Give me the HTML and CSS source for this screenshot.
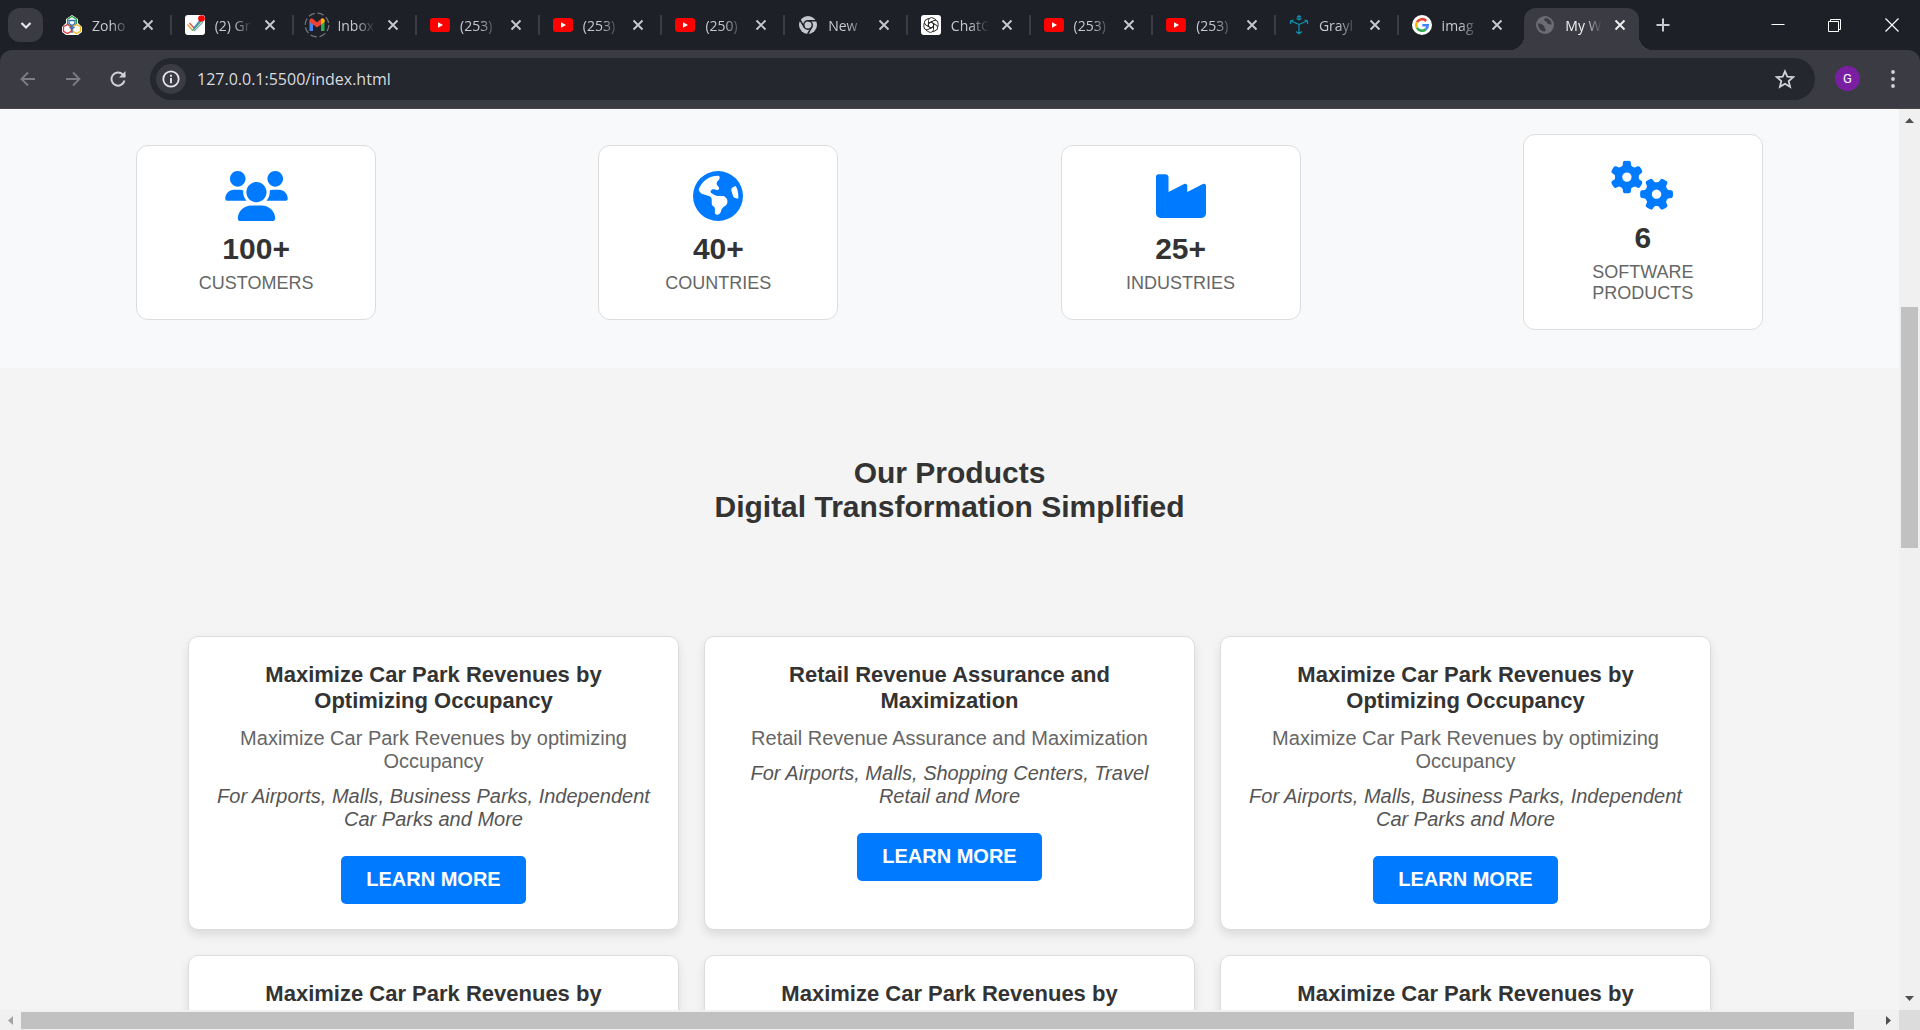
FILE: index.html
```html
<!DOCTYPE html>
<html lang="en">
<head>
<meta charset="utf-8">
<meta name="viewport" content="width=device-width, initial-scale=1">
<title>My Website</title>
<link rel="stylesheet" href="styles.css">
</head>
<body>
<svg class="sprite" aria-hidden="true">
  <symbol id="i-x" viewBox="0 0 20 20"><path d="M5.500 5.500l9 9M14.500 5.500l-9 9" stroke="currentColor" stroke-width="1.900" fill="none"/></symbol>
  <symbol id="i-yt" viewBox="0 0 20 20"><rect y="3" width="20" height="14" rx="3" fill="#f00"/><path d="M8 7.300l5 2.700-5 2.700z" fill="#fff"/></symbol>
  <symbol id="i-gear" viewBox="-170 -170 340 340"><path fill-rule="evenodd" d="M0-122A122 122 0 1 1 0 122A122 122 0 1 1 0-122zM0-48A48 48 0 1 0 0 48A48 48 0 1 0 0-48z"/><g id="teeth"><path id="tooth" d="M-60-98L-44-120-40-152Q-38-167-22-168Q0-171 22-168Q38-167 40-152L44-120 60-98z"/><use href="#tooth" transform="rotate(60)"/><use href="#tooth" transform="rotate(120)"/><use href="#tooth" transform="rotate(180)"/><use href="#tooth" transform="rotate(240)"/><use href="#tooth" transform="rotate(300)"/></g></symbol>
</svg>
<div class="window">
  <header class="tabstrip">
    <button class="tab-search" aria-label="Search tabs"><svg class="ic" viewBox="0 0 20 20"><path d="M5.500 8l4.500 4.500L14.500 8" fill="none" stroke="currentColor" stroke-width="2.200"/></svg></button>
    <nav class="tabs" aria-label="Tabs">
      <div class="tab"><svg class="ic" viewBox="0 0 20 20"><path d="M10 0l6 4v4l4 4v5l-4 3H4l-4-3v-5l4-4V4z" fill="#fff"/><g fill="none" stroke-width="1.300"><path d="M10 1.500l4.500 2.700v5L10 12 5.500 9.200v-5z" stroke="#2ba24c"/><path d="M5.500 9.500l3.800 2.300v4.500L5.500 18.500 1.500 16.300v-4.500z" stroke="#e5393b"/><path d="M14.500 9.500l4 2.300v4.500l-4 2.200-3.800-2.200v-4.500z" stroke="#f5b921"/><path d="M7 5.500h6v3l-3 2-3-2zM10 10v8M7.500 12l2.500 2 2.500-2" stroke="#2f6fb5"/></g></svg><span class="tab-title">Zoho</span><button class="tab-close" aria-label="Close tab"><svg class="ic"><use href="#i-x"/></svg></button></div>
      <div class="tab"><svg class="ic" viewBox="0 0 20 20"><rect width="20" height="20" rx="3" fill="#fff"/><g fill="none" stroke-width="1.300"><path d="M2.500 9.500l5 6" stroke="#f2a03d"/><path d="M4.500 8l4.500 5" stroke="#e5513e"/><path d="M7.500 15.500l9-10" stroke="#35a853"/><path d="M9 13l7-9" stroke="#4a86c9"/><path d="M9 16l9-9" stroke="#7aa7b5"/></g><circle cx="16.500" cy="3.500" r="3.300" fill="#f00"/></svg><span class="tab-title">(2) Gr</span><button class="tab-close" aria-label="Close tab"><svg class="ic"><use href="#i-x"/></svg></button></div>
      <div class="tab"><svg class="ic" viewBox="0 0 20 20" overflow="visible"><circle cx="10" cy="10" r="11.800" fill="none" stroke="#71757f" stroke-width="1.300" stroke-dasharray="6.500 2.800"/><path d="M2.500 5.500V16H6V8.500z" fill="#4285f4"/><path d="M17.500 5.500V16H14V8.500z" fill="#34a853"/><path d="M2.500 5.500c0-2 2-2.500 3.500-1.500l4 3.200L14 4c1.500-1 3.500-.5 3.500 1.500V7L10 12.500 2.500 7z" fill="#ea4335"/><path d="M14 4c1.500-1 3.500-.5 3.500 1.500V7L14 9.500z" fill="#fbbc04"/></svg><span class="tab-title">Inbox</span><button class="tab-close" aria-label="Close tab"><svg class="ic"><use href="#i-x"/></svg></button></div>
      <div class="tab"><svg class="ic"><use href="#i-yt"/></svg><span class="tab-title">(253)</span><button class="tab-close" aria-label="Close tab"><svg class="ic"><use href="#i-x"/></svg></button></div>
      <div class="tab"><svg class="ic"><use href="#i-yt"/></svg><span class="tab-title">(253)</span><button class="tab-close" aria-label="Close tab"><svg class="ic"><use href="#i-x"/></svg></button></div>
      <div class="tab"><svg class="ic"><use href="#i-yt"/></svg><span class="tab-title">(250)</span><button class="tab-close" aria-label="Close tab"><svg class="ic"><use href="#i-x"/></svg></button></div>
      <div class="tab"><svg class="ic" viewBox="0 0 20 20"><circle cx="10" cy="10" r="9" fill="#c4c7cf"/><circle cx="10" cy="10" r="4.300" fill="none" stroke="#1d2027" stroke-width="1.500"/><path d="M10 5.700h8.500M6.300 12.200L2 5M13.700 12.200L9.700 19" stroke="#1d2027" stroke-width="1.500"/></svg><span class="tab-title">New</span><button class="tab-close" aria-label="Close tab"><svg class="ic"><use href="#i-x"/></svg></button></div>
      <div class="tab"><svg class="ic" viewBox="0 0 20 20"><rect width="20" height="20" rx="3" fill="#fff"/><g transform="translate(10 10)" fill="none" stroke="#222" stroke-width=".9"><path id="petal" d="M-2.500-1.500V-4.500a3 3 0 0 1 4.500-2.500l3 1.700M-2.500-1.500L0-3l3.500 2"/><use href="#petal" transform="rotate(60)"/><use href="#petal" transform="rotate(120)"/><use href="#petal" transform="rotate(180)"/><use href="#petal" transform="rotate(240)"/><use href="#petal" transform="rotate(300)"/></g></svg><span class="tab-title">ChatG</span><button class="tab-close" aria-label="Close tab"><svg class="ic"><use href="#i-x"/></svg></button></div>
      <div class="tab"><svg class="ic"><use href="#i-yt"/></svg><span class="tab-title">(253)</span><button class="tab-close" aria-label="Close tab"><svg class="ic"><use href="#i-x"/></svg></button></div>
      <div class="tab"><svg class="ic"><use href="#i-yt"/></svg><span class="tab-title">(253)</span><button class="tab-close" aria-label="Close tab"><svg class="ic"><use href="#i-x"/></svg></button></div>
      <div class="tab"><svg class="ic" viewBox="0 0 20 20"><path d="M10 18.500V9.500L2 6M10 9.500L18 6M10 4.500V1M8 2.200L10 .7l2 1.500M7.500 3.500L10 4.800l2.500-1.300M1.500 9V6l3-1M18.500 9V6l-3-1M7 16.500l3 2.300 3-2.300" fill="none" stroke="#0e93b3" stroke-width="1.200"/></svg><span class="tab-title">Grayl</span><button class="tab-close" aria-label="Close tab"><svg class="ic"><use href="#i-x"/></svg></button></div>
      <div class="tab tab-last"><svg class="ic" viewBox="0 0 20 20"><circle cx="10" cy="10" r="10" fill="#fff"/><g fill="none" stroke-width="2.600"><path d="M14.200 6A5.700 5.700 0 0 0 5 7.200" stroke="#ea4335"/><path d="M5 7.200a5.700 5.700 0 0 0 0 5.600" stroke="#fbbc05"/><path d="M5 12.800a5.700 5.700 0 0 0 8.800 1.400" stroke="#34a853"/><path d="M13.800 14.200a5.700 5.700 0 0 0 1.900-3.900H10.300" stroke="#4285f4"/></g></svg><span class="tab-title">imag</span><button class="tab-close" aria-label="Close tab"><svg class="ic"><use href="#i-x"/></svg></button></div>
      <div class="tab tab-active"><svg class="ic" viewBox="0 0 20 20"><circle cx="10" cy="10" r="9" fill="#6b6d72"/><path d="M3 9c2-1 4 0 6 2 1 1 0 3 2 3l-1 2.500C6 16.500 3 13 3 9zM10 3c-1.500 1.500-.5 3 1 3.500s1 2.500 3 2.500l2.500.8C17 6 14 3 10 3z" fill="#3b3b43"/></svg><span class="tab-title">My W</span><button class="tab-close" aria-label="Close tab"><svg class="ic"><use href="#i-x"/></svg></button></div>
    </nav>
    <button class="new-tab" aria-label="New tab"><svg class="ic" viewBox="0 0 20 20"><path d="M10 3.500v13M3.500 10h13" stroke="currentColor" stroke-width="2"/></svg></button>
    <div class="win-controls">
      <button aria-label="Minimize"><svg class="ic" viewBox="0 0 20 20"><path d="M3.500 9.500h13" stroke="currentColor"/></svg></button>
      <button aria-label="Restore"><svg class="ic" viewBox="0 0 20 20"><path d="M3.500 6.500h10v10h-10zM5.500 6V4.500h10v10H14" fill="none" stroke="currentColor"/></svg></button>
      <button aria-label="Close"><svg class="ic" viewBox="0 0 20 20"><path d="M3.500 3.500l13 13M16.500 3.500l-13 13" stroke="currentColor" stroke-width="1.200"/></svg></button>
    </div>
  </header>

  <div class="toolbar">
    <button class="tool dim" aria-label="Back"><svg class="ic" viewBox="0 0 20 20"><path d="M17 10H4M10 3.500L3.500 10l6.500 6.500" fill="none" stroke="currentColor" stroke-width="1.800"/></svg></button>
    <button class="tool dim" aria-label="Forward"><svg class="ic" viewBox="0 0 20 20"><path d="M3 10h13M10 3.500l6.500 6.500-6.500 6.500" fill="none" stroke="currentColor" stroke-width="1.800"/></svg></button>
    <button class="tool" aria-label="Reload"><svg class="ic" viewBox="0 0 20 20"><path d="M16.500 11.500A6.600 6.600 0 1 1 14.800 5.400L17 7.500" fill="none" stroke="currentColor" stroke-width="2"/><path d="M17.500 2v6.500H11z" fill="currentColor"/></svg></button>
    <div class="omnibox">
      <button class="site-info" aria-label="View site information"><svg class="ic" viewBox="0 0 20 20"><circle cx="10" cy="10" r="7.700" fill="none" stroke="currentColor" stroke-width="1.800"/><path d="M10 9v5.200M10 5.800v1.900" stroke="currentColor" stroke-width="1.900"/></svg></button>
      <input class="url" type="text" aria-label="Address" value="127.0.0.1:5500/index.html">
      <button class="star" aria-label="Bookmark this tab"><svg class="ic" viewBox="0 0 20 20"><path d="M10 2.300l2.300 5.300 5.900.5-4.500 3.900 1.400 5.800L10 14.700l-5.100 3.100L6.300 12 1.800 8.100l5.900-.5z" fill="none" stroke="currentColor" stroke-width="1.800"/></svg></button>
    </div>
    <button class="profile" aria-label="Profile">G</button>
    <button class="menu" aria-label="Menu"><svg class="ic" viewBox="0 0 20 20"><g fill="currentColor"><circle cx="10" cy="3" r="1.900"/><circle cx="10" cy="10" r="1.900"/><circle cx="10" cy="17" r="1.900"/></g></svg></button>
  </div>

  <div class="viewport">
    <main class="page">
      <section class="stats">
        <div class="stat"><svg class="stat-icon wide" viewBox="0 0 640 512"><path d="M319.900 320c57.410 0 103.100-46.560 103.100-104c0-57.440-46.540-104-103.100-104c-57.410 0-103.100 46.560-103.100 104C215.900 273.400 262.500 320 319.900 320zM369.900 352H270.100C191.600 352 128 411.700 128 485.300C128 500.100 140.700 512 156.400 512h327.200C499.300 512 512 500.100 512 485.300C512 411.700 448.400 352 369.900 352zM512 160c44.180 0 80-35.820 80-80S556.200 0 512 0c-44.180 0-80 35.820-80 80S467.800 160 512 160zM183.900 216c0-5.449 .9824-10.630 1.609-15.910C174.600 194.100 162.600 192 149.900 192H88.080C39.440 192 0 233.800 0 285.300C0 295.600 7.887 304 17.620 304h199.500C196.700 280.200 183.900 249.700 183.900 216zM128 160c44.180 0 80-35.820 80-80S172.200 0 128 0C83.820 0 48 35.820 48 80S83.820 160 128 160zM551.900 192h-61.840c-12.800 0-24.880 3.037-35.860 8.240C454.800 205.500 455.800 210.600 455.800 216c0 33.710-12.780 64.210-33.160 88h199.700C632.100 304 640 295.600 640 285.300C640 233.800 600.600 192 551.900 192z"/></svg><h3 class="stat-number">100+</h3><p class="stat-label">CUSTOMERS</p></div>
        <div class="stat"><svg class="stat-icon" viewBox="0 0 512 512"><path d="M57.700 193l9.400 16.400c8.300 14.500 21.900 25.200 38 29.800L163 255.700c17.200 4.900 29 20.600 29 38.500v39.900c0 11 6.200 21 16 25.900s16 14.900 16 25.900v39c0 15.600 14.900 26.900 29.900 22.600c16.100-4.600 28.600-17.500 32.700-33.800l2.800-11.200c4.200-16.900 15.200-31.400 30.300-40l8.100-4.600c15-8.500 24.200-24.500 24.200-41.700v-8.300c0-12.700-5.100-24.900-14.100-33.900l-3.900-3.900c-9-9-21.200-14.100-33.900-14.100H257c-11.100 0-22.100-2.900-31.800-8.400l-34.500-19.700c-4.300-2.500-7.600-6.500-9.200-11.200c-3.200-9.600 1.100-20 10.200-24.500l5.900-3c6.600-3.300 14.300-3.900 21.300-1.500l23.200 7.700c8.200 2.700 17.200-.4 21.900-7.500c4.700-7 4.200-16.300-1.200-22.800l-13.600-16.300c-10-12-9.900-29.500 .3-41.300l15.700-18.300c8.800-10.300 10.200-25 3.500-36.700l-2.400-4.200c-3.500-.2-6.900-.3-10.400-.3C163.100 48 84.400 108.900 57.700 193zM464 256c0-36.800-9.600-71.400-26.400-101.500L412 164.800c-15.700 6.300-23.800 23.800-18.500 39.800l16.900 50.700c3.500 10.400 12 18.300 22.600 20.900l29.100 7.300c1.200-9 1.800-18.200 1.800-27.500zM0 256a256 256 0 1 1 512 0A256 256 0 1 1 0 256z"/></svg><h3 class="stat-number">40+</h3><p class="stat-label">COUNTRIES</p></div>
        <div class="stat"><svg class="stat-icon" viewBox="0 0 512 512"><path d="M24 32H96c18 0 32 12 32 30v153l160-83c15-7 32 2 32 17v66l160-83c15-7 32 2 32 17v283c0 27-21 48-48 48H48c-27 0-48-21-48-48V56C0 43 11 32 24 32z"/></svg><h3 class="stat-number">25+</h3><p class="stat-label">INDUSTRIES</p></div>
        <div class="stat"><svg class="stat-icon wide" viewBox="0 0 640 512"><use href="#i-gear" x="-9" y="6" width="338" height="338"/><g transform="translate(464 350) rotate(30)"><use href="#i-gear" x="-169" y="-169" width="338" height="338"/></g></svg><h3 class="stat-number">6</h3><p class="stat-label">SOFTWARE PRODUCTS</p></div>
      </section>
      <section class="products">
        <h2 class="products-title">Our Products<br>Digital Transformation Simplified</h2>
        <div class="grid">
          <article class="card"><h3>Maximize Car Park Revenues by Optimizing Occupancy</h3><p>Maximize Car Park Revenues by optimizing Occupancy</p><p class="audience">For Airports, Malls, Business Parks, Independent Car Parks and More</p><a class="btn" href="#">LEARN MORE</a></article>
          <article class="card"><h3>Retail Revenue Assurance and Maximization</h3><p>Retail Revenue Assurance and Maximization</p><p class="audience">For Airports, Malls, Shopping Centers, Travel Retail and More</p><a class="btn" href="#">LEARN MORE</a></article>
          <article class="card"><h3>Maximize Car Park Revenues by Optimizing Occupancy</h3><p>Maximize Car Park Revenues by optimizing Occupancy</p><p class="audience">For Airports, Malls, Business Parks, Independent Car Parks and More</p><a class="btn" href="#">LEARN MORE</a></article>
          <article class="card"><h3>Maximize Car Park Revenues by</h3></article>
          <article class="card"><h3>Maximize Car Park Revenues by</h3></article>
          <article class="card"><h3>Maximize Car Park Revenues by</h3></article>
        </div>
      </section>
    </main>
    <div class="vbar"><svg class="arrow" viewBox="0 0 21 21"><path d="M6 14h9L10.500 9z" fill="#505050"/></svg><div class="vtrack"><div class="vthumb"></div></div><svg class="arrow" viewBox="0 0 21 21"><path d="M6 7h9l-4.500 5z" fill="#505050"/></svg></div>
    <div class="hbar"><svg class="arrow" viewBox="0 0 21 21"><path d="M13 6v9l-5-4.500z" fill="#a3a3a3"/></svg><div class="htrack"><div class="hthumb"></div></div><svg class="arrow" viewBox="0 0 21 21"><path d="M8 6v9l5-4.500z" fill="#505050"/></svg></div>
    <div class="corner"></div>
  </div>
</div>
</body>
</html>
```
FILE: styles.css
```css
* { box-sizing: border-box; }

body {
  margin: 0;
  font-family: "Liberation Sans", Arial, sans-serif;
  color: #333;
}

h2, h3, p { margin: 0; }

button {
  border: 0;
  padding: 0;
  background: none;
  color: inherit;
  font: inherit;
  display: flex;
  align-items: center;
  justify-content: center;
}

.sprite { position: absolute; width: 0; height: 0; }
.ic { width: 20px; height: 20px; flex: none; display: block; }

.window {
  height: 100vh;
  display: flex;
  flex-direction: column;
  overflow: hidden;
  background: #1d2027;
}

/* Tab strip */
.tabstrip {
  flex: none;
  height: 50px;
  display: flex;
  align-items: center;
  padding-left: 8px;
  color: #c7c9cf;
  font-family: "Open Sans", "Noto Sans", sans-serif;
  font-size: 14px;
}
.tab-search {
  width: 35px;
  height: 34px;
  border-radius: 12px;
  background: #3b3b43;
  color: #e6e6ea;
}
.tabs {
  flex: 0 1 1595px;
  min-width: 0;
  margin-left: 5px;
  align-self: stretch;
  display: grid;
  grid-template-columns: repeat(13, 1fr);
}
.tab {
  position: relative;
  display: flex;
  align-items: center;
  padding: 0 13px 0 14px;
  min-width: 0;
}
.tab::after {
  content: "";
  position: absolute;
  right: -1px;
  top: 15px;
  width: 2px;
  height: 20px;
  background: #3b3d44;
}
.tab-last::after { display: none; }
.tab-title {
  flex: 1;
  min-width: 0;
  margin: 0 8px 0 10px;
  overflow: hidden;
  white-space: nowrap;
  -webkit-mask-image: linear-gradient(to right, #000 50%, transparent);
  mask-image: linear-gradient(to right, #000 50%, transparent);
}
.tab-active {
  margin: 8px 4px 0;
  padding: 0 9px 8px 11px;
  border-radius: 12px 12px 0 0;
  background: #3b3b43;
  color: #f0f0f2;
}
/* Flared feet of the active tab */
.tab-active::before,
.tab-active::after {
  content: "";
  position: absolute;
  display: block;
  top: auto;
  bottom: 0;
  width: 14px;
  height: 14px;
}
.tab-active::before {
  left: -14px;
  background: radial-gradient(circle at 0 0, transparent 14px, #3b3b43 14px);
}
.tab-active::after {
  right: -14px;
  background: radial-gradient(circle at 100% 0, transparent 14px, #3b3b43 14px);
}
.new-tab { width: 40px; height: 40px; }
.win-controls {
  margin-left: auto;
  display: flex;
  align-self: stretch;
  color: #fff;
}
.win-controls button { width: 57px; }

/* Toolbar */
.toolbar {
  flex: none;
  height: 59px;
  display: flex;
  align-items: center;
  padding: 0 12px 1px 5px;
  border-bottom: 1px solid #4b4548;
  border-radius: 12px 12px 0 0;
  background: #3b3b43;
  color: #d0d2d8;
}
.tool { width: 45px; height: 42px; }
.dim { color: #7c7d84; }
.omnibox {
  flex: 1;
  height: 42px;
  margin: 0 20px 0 10px;
  padding: 0 20px 0 6px;
  display: flex;
  align-items: center;
  border-radius: 21px;
  background: #24272e;
}
.site-info {
  width: 30px;
  height: 30px;
  border-radius: 50%;
  background: #3b3b43;
  color: #e6e6ea;
}
.url {
  flex: 1;
  min-width: 0;
  margin-left: 11px;
  padding: 0;
  border: 0;
  outline: 0;
  background: none;
  color: #d8dadf;
  font-family: "Open Sans", "Noto Sans", sans-serif;
  font-size: 16px;
}
.profile {
  width: 25px;
  height: 25px;
  border-radius: 50%;
  background: #7b1fa2;
  color: #fff;
  font-family: Roboto, sans-serif;
  font-size: 13px;
}
.menu { width: 30px; height: 40px; margin-left: 18px; }

/* Page viewport and its scrollbars */
.viewport {
  flex: 1;
  min-height: 0;
  display: grid;
  grid-template: minmax(0, 1fr) 20px / minmax(0, 1fr) 21px;
  background: #f4f4f4;
}
.page { overflow: hidden; }
.vbar, .hbar { display: flex; background: #f0f0f0; }
.vbar { flex-direction: column; }
.arrow { flex: none; width: 21px; height: 21px; display: block; }
.vtrack, .htrack { flex: 1; display: flex; min-width: 0; min-height: 0; }
.vtrack { flex-direction: column; padding: 0 2px; }
.vtrack::before { content: ""; flex: 177; }
.vtrack::after { content: ""; flex: 441; }
.vthumb { flex: 241; background: #c1c1c1; }
.htrack { padding: 2px 0 1px; }
.htrack::after { content: ""; flex: 24; }
.hthumb { flex: 1833; background: #c1c1c1; }
.corner { background: #dcdcdc; }

/* Key figures */
.stats {
  display: flex;
  justify-content: space-around;
  align-items: center;
  padding: 25px 25px 38px;
  background: #f8f9fb;
}
.stat {
  width: 240px;
  padding: 25px;
  border: 1px solid #ddd;
  border-radius: 12px;
  background: #fff;
  text-align: center;
}
.stat-icon {
  display: block;
  width: 50px;
  height: 50px;
  margin: 0 auto 11px;
  fill: #007bff;
}
.stat-icon.wide { width: 63px; }
.stat-number {
  margin-bottom: 7px;
  font-size: 30px;
  line-height: 34px;
}
.stat-label {
  font-size: 18px;
  line-height: 21px;
  color: #666;
}

/* Products */
.products { padding: 88px 188px 60px; background: #f4f4f4; }
.products-title {
  margin-bottom: 112px;
  font-size: 30px;
  line-height: 34px;
  text-align: center;
}
.grid {
  display: grid;
  grid-template-columns: repeat(3, minmax(0, 1fr));
  gap: 25px;
}
.card {
  padding: 25px;
  border: 1px solid #ddd;
  border-radius: 10px;
  background: #fff;
  box-shadow: 0 5px 10px rgba(0, 0, 0, 0.1);
  text-align: center;
}
.card h3 {
  margin-bottom: 13px;
  font-size: 22px;
  line-height: 26px;
}
.card p {
  margin-bottom: 12px;
  font-size: 20px;
  line-height: 23px;
  color: #666;
}
.card .audience {
  margin-bottom: 25px;
  font-style: italic;
  color: #555;
}
.btn {
  display: inline-block;
  padding: 12px 25px 13px;
  border-radius: 5px;
  background: #007bff;
  color: #fff;
  font-size: 20px;
  line-height: 23px;
  font-weight: bold;
  text-decoration: none;
  vertical-align: top;
}
```
